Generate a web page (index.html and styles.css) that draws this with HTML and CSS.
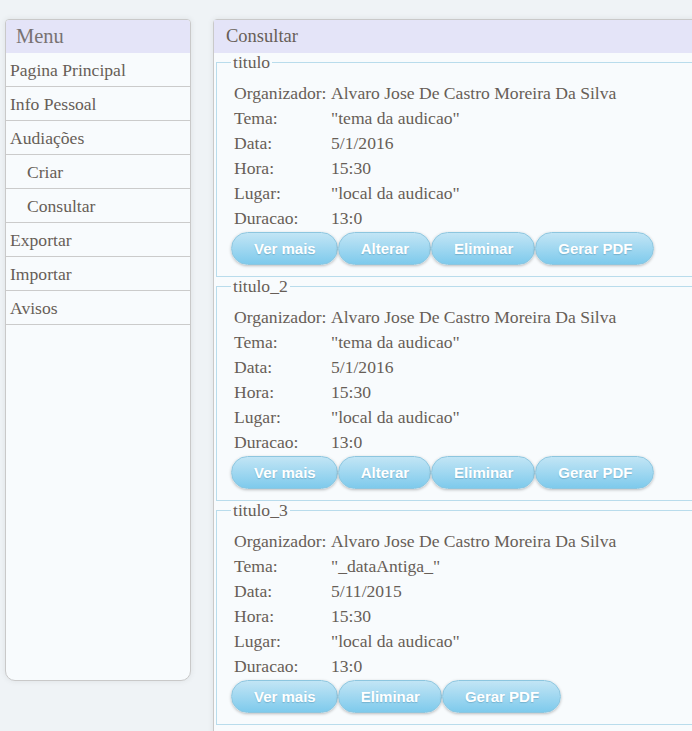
FILE: index.html
```html
<!DOCTYPE html>
<html lang="pt">
<head>
<meta charset="utf-8">
<title>Consultar</title>
<link rel="stylesheet" href="styles.css">
</head>
<body>
<div class="layout">
  <nav class="menu">
    <div class="menu-title">Menu</div>
    <a class="menu-item" href="#">Pagina Principal</a>
    <a class="menu-item" href="#">Info Pessoal</a>
    <a class="menu-item" href="#">Audiações</a>
    <a class="menu-item sub" href="#">Criar</a>
    <a class="menu-item sub" href="#">Consultar</a>
    <a class="menu-item" href="#">Exportar</a>
    <a class="menu-item" href="#">Importar</a>
    <a class="menu-item" href="#">Avisos</a>
  </nav>
  <main class="content">
    <div class="content-title">Consultar</div>

    <fieldset class="entry">
      <legend>titulo</legend>
      <div class="rows">
        <span>Organizador:</span><span>Alvaro Jose De Castro Moreira Da Silva</span>
        <span>Tema:</span><span>"tema da audicao"</span>
        <span>Data:</span><span>5/1/2016</span>
        <span>Hora:</span><span>15:30</span>
        <span>Lugar:</span><span>"local da audicao"</span>
        <span>Duracao:</span><span>13:0</span>
      </div>
      <div class="buttons">
        <button class="btn">Ver mais</button>
        <button class="btn">Alterar</button>
        <button class="btn">Eliminar</button>
        <button class="btn">Gerar PDF</button>
      </div>
    </fieldset>

    <fieldset class="entry">
      <legend>titulo_2</legend>
      <div class="rows">
        <span>Organizador:</span><span>Alvaro Jose De Castro Moreira Da Silva</span>
        <span>Tema:</span><span>"tema da audicao"</span>
        <span>Data:</span><span>5/1/2016</span>
        <span>Hora:</span><span>15:30</span>
        <span>Lugar:</span><span>"local da audicao"</span>
        <span>Duracao:</span><span>13:0</span>
      </div>
      <div class="buttons">
        <button class="btn">Ver mais</button>
        <button class="btn">Alterar</button>
        <button class="btn">Eliminar</button>
        <button class="btn">Gerar PDF</button>
      </div>
    </fieldset>

    <fieldset class="entry">
      <legend>titulo_3</legend>
      <div class="rows">
        <span>Organizador:</span><span>Alvaro Jose De Castro Moreira Da Silva</span>
        <span>Tema:</span><span>"_dataAntiga_"</span>
        <span>Data:</span><span>5/11/2015</span>
        <span>Hora:</span><span>15:30</span>
        <span>Lugar:</span><span>"local da audicao"</span>
        <span>Duracao:</span><span>13:0</span>
      </div>
      <div class="buttons">
        <button class="btn">Ver mais</button>
        <button class="btn">Eliminar</button>
        <button class="btn">Gerar PDF</button>
      </div>
    </fieldset>
  </main>
</div>
</body>
</html>
```
FILE: styles.css
```css
html, body {
  margin: 0;
  padding: 0;
  overflow: hidden;
}
body {
  background: #eff3f6;
  font-family: "Liberation Serif", "Times New Roman", serif;
  color: #675e57;
}
.layout {
  display: flex;
  align-items: flex-start;
  gap: 22px;
  padding: 19px 0 0 5px;
  width: 1000px;
}
.menu {
  width: 184px;
  height: 660px;
  display: flex;
  flex-direction: column;
  background: #f8fbfd;
  border: 1px solid #c9c9c9;
  border-radius: 4px 4px 10px 10px;
  box-shadow: 0 0 6px rgba(0, 0, 0, 0.08);
  overflow: hidden;
}
.menu-title {
  height: 33px;
  line-height: 33px;
  background: #e4e4f8;
  font-size: 20.5px;
  padding-left: 10px;
  color: #787272;
}
.menu-item {
  display: block;
  height: 32px;
  padding-top: 1px;
  line-height: 33px;
  border-bottom: 1px solid #cbcbcb;
  padding-left: 4px;
  font-size: 17.6px;
  color: #675e57;
  text-decoration: none;
}
.menu-item.sub {
  padding-left: 21px;
}
.content {
  width: 620px;
  background: #f8fbfd;
  border: 1px solid #c9c9c9;
  border-radius: 4px 0 0 0;
  box-shadow: 0 0 6px rgba(0, 0, 0, 0.08);
  min-height: 760px;
}
.content-title {
  height: 33px;
  line-height: 32px;
  background: #e4e4f8;
  font-size: 18.5px;
  padding-left: 12px;
  color: #675e57;
}
.entry {
  margin: 0 2px 0;
  padding: 10px 12px 11px 14px;
  border: 1px solid #b9dcec;
}
.entry legend {
  font-size: 17.6px;
  padding: 0 2px;
  line-height: 18px;
}
.rows {
  display: grid;
  grid-template-columns: 97px 1fr;
  padding-left: 3px;
  font-size: 17.6px;
  line-height: 25px;
}
.buttons {
  display: flex;
  gap: 0;
  margin-top: 1px;
}
.btn {
  height: 33px;
  padding: 0 21px 0 22px;
  border: 1px solid #8dc6df;
  border-radius: 17px;
  background: linear-gradient(#c2e5f5, #7ecaec);
  color: #fff;
  font-family: "Liberation Sans", Arial, sans-serif;
  font-weight: bold;
  font-size: 15px;
  text-shadow: 0 1px 1px rgba(60, 120, 150, 0.35);
  box-shadow: 0 1px 3px rgba(0, 0, 0, 0.25);
  cursor: pointer;
}
```
